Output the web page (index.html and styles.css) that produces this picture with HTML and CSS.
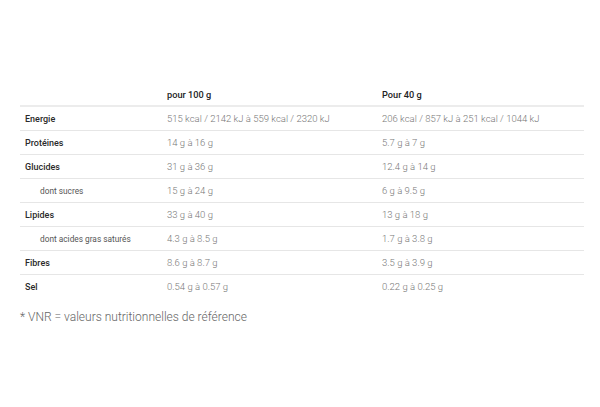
FILE: index.html
```html
<!DOCTYPE html>
<html lang="fr">
<head>
<meta charset="utf-8">
<link rel="stylesheet" href="styles.css">
</head>
<body>
<div class="wrap">
  <table class="nut">
    <colgroup>
      <col class="c1"><col class="c2"><col class="c3">
    </colgroup>
    <thead>
      <tr><th></th><th>pour 100 g</th><th>Pour 40 g</th></tr>
    </thead>
    <tbody>
      <tr><td class="lbl">Energie</td><td>515 kcal / 2142 kJ à 559 kcal / 2320 kJ</td><td>206 kcal / 857 kJ à 251 kcal / 1044 kJ</td></tr>
      <tr><td class="lbl">Protéines</td><td>14 g à 16 g</td><td>5.7 g à 7 g</td></tr>
      <tr><td class="lbl">Glucides</td><td>31 g à 36 g</td><td>12.4 g à 14 g</td></tr>
      <tr><td class="sub">dont sucres</td><td>15 g à 24 g</td><td>6 g à 9.5 g</td></tr>
      <tr><td class="lbl">Lipides</td><td>33 g à 40 g</td><td>13 g à 18 g</td></tr>
      <tr><td class="sub">dont acides gras saturés</td><td>4.3 g à 8.5 g</td><td>1.7 g à 3.8 g</td></tr>
      <tr><td class="lbl">Fibres</td><td>8.6 g à 8.7 g</td><td>3.5 g à 3.9 g</td></tr>
      <tr class="last"><td class="lbl">Sel</td><td>0.54 g à 0.57 g</td><td>0.22 g à 0.25 g</td></tr>
    </tbody>
  </table>
  <p class="note">* VNR = valeurs nutritionnelles de référence</p>
</div>
</body>
</html>
```
FILE: styles.css
```css
html, body {
  margin: 0;
  padding: 0;
  background: #fff;
}
body {
  font-family: Roboto, "Liberation Sans", sans-serif;
  width: 600px;
  height: 407px;
  overflow: hidden;
}
.wrap {
  padding: 83px 16px 0 20px;
}
.nut {
  width: 564px;
  border-collapse: collapse;
  table-layout: fixed;
}
.c1 { width: 142px; }
.c2 { width: 215px; }
.c3 { width: 207px; }
.nut th, .nut td {
  height: 23px;
  padding: 0 5px;
  text-align: left;
  vertical-align: middle;
  font-size: 9.5px;
  white-space: nowrap;
}
.nut th {
  font-weight: 500;
  font-size: 9.2px;
  color: #222;
  border-bottom: 2px solid #ececec;
  height: 22px;
}
.nut td {
  font-weight: 300;
  color: #777;
  border-bottom: 1px solid #e6e6e6;
}
.nut tr.last td {
  border-bottom: none;
}
.nut td.lbl {
  font-weight: 500;
  font-size: 9px;
  color: #2a2a2a;
}
.nut td.sub {
  padding-left: 20px;
  font-size: 8.3px;
  color: #555;
  font-weight: 400;
}
.note {
  margin: 12px 0 0 0;
  font-size: 12px;
  font-weight: 300;
  color: #666;
}
```
